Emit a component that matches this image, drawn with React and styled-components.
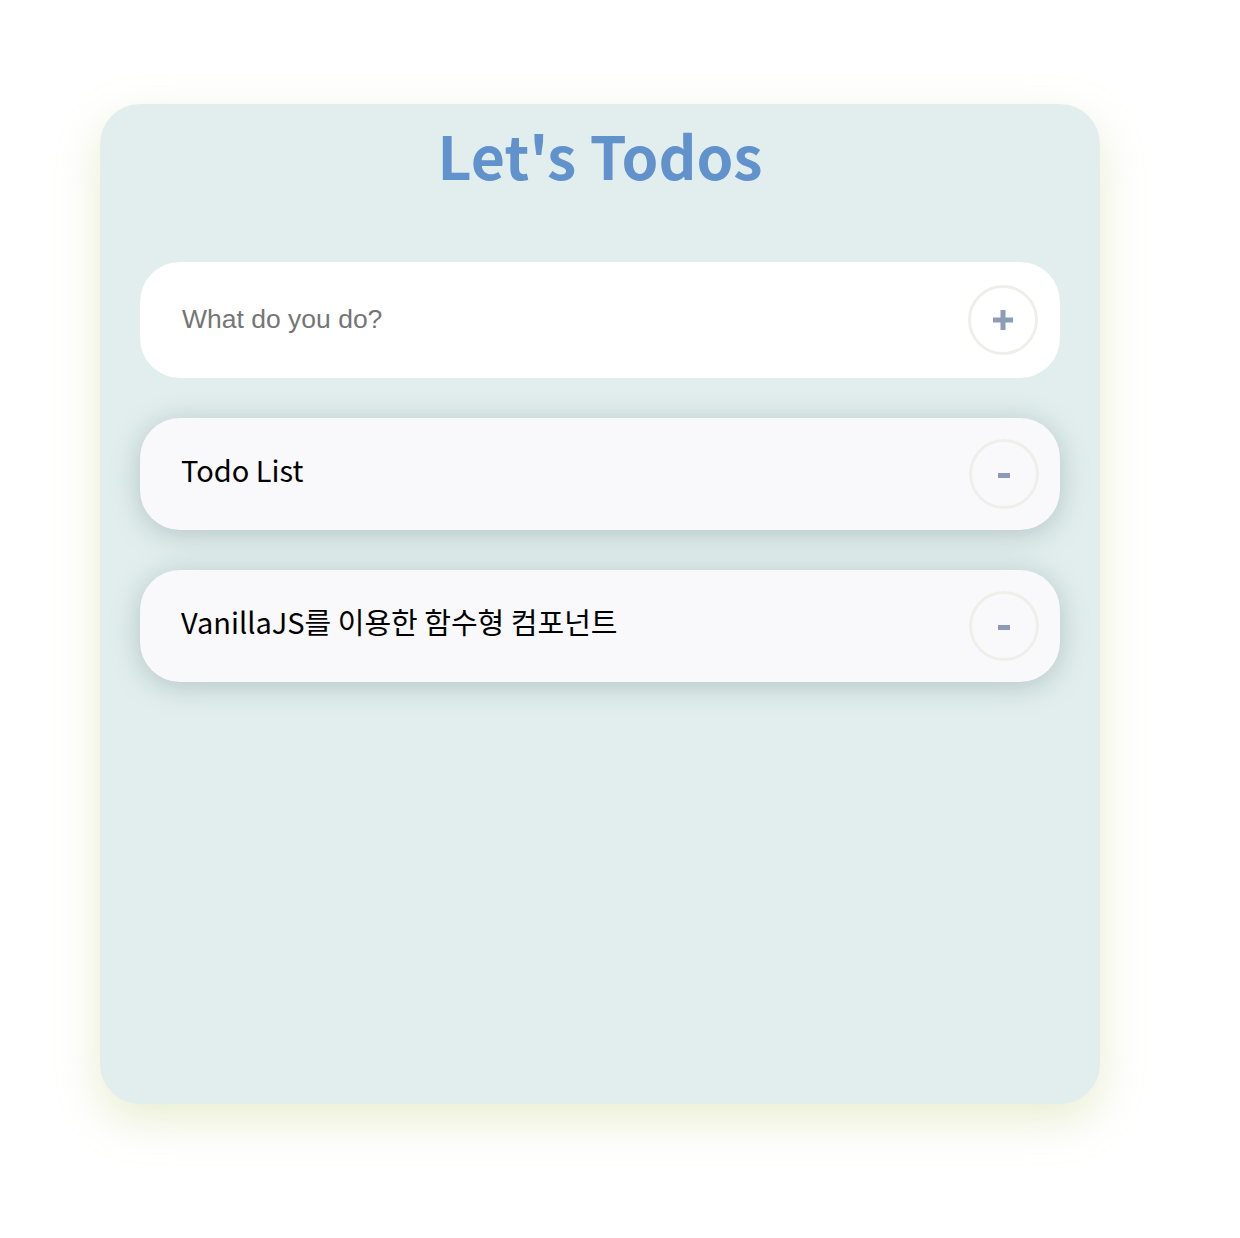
import React from "react";
import styled, { createGlobalStyle } from "styled-components";

const GlobalStyle = createGlobalStyle`
  html, body {
    margin: 0;
    padding: 0;
    background: #ffffff;
  }
`;

const Page = styled.div`
  padding: 104px 140px 134px 100px;
`;

const Board = styled.div`
  width: 1000px;
  height: 1000px;
  box-sizing: border-box;
  padding: 0 40px;
  background-color: #e2eeee;
  border-radius: 40px;
  box-shadow: 0 16px 44px rgba(226, 234, 196, 0.8);
  font-family: "Noto Sans CJK KR", "Noto Sans", sans-serif;
`;

const Title = styled.h1`
  margin: 0;
  padding-top: 6px;
  height: 158px;
  box-sizing: border-box;
  text-align: center;
  font-size: 59px;
  font-weight: 700;
  line-height: 90px;
  color: #6192cc;
`;

const InputRow = styled.form`
  height: 116px;
  box-sizing: border-box;
  display: flex;
  align-items: center;
  justify-content: space-between;
  padding: 0 22px 0 42px;
  background: #ffffff;
  border-radius: 40px;
`;

const TodoInput = styled.input`
  flex: 1;
  border: none;
  outline: none;
  background: transparent;
  font-family: "Liberation Sans", Arial, sans-serif;
  font-size: 26.5px;
  color: #333;
  padding: 0;
  margin-top: -2px;
  &::placeholder {
    color: #757575;
  }
`;

const RoundButton = styled.button`
  width: 70px;
  height: 70px;
  flex: none;
  border-radius: 50%;
  border: 3px solid #efefea;
  background: transparent;
  display: flex;
  align-items: center;
  justify-content: center;
  padding: 0;
  cursor: pointer;
`;

const List = styled.ul`
  list-style: none;
  margin: 40px 0 0;
  padding: 0;
  display: flex;
  flex-direction: column;
  gap: 40px;
`;

const Item = styled.li`
  height: 112px;
  box-sizing: border-box;
  display: flex;
  align-items: center;
  justify-content: space-between;
  padding: 0 21px 0 41px;
  background: #f9f9fb;
  border-radius: 40px;
  box-shadow: 0 4px 28px rgba(100, 130, 125, 0.38);
`;

const ItemText = styled.span`
  font-size: 29px;
  color: #000;
  margin-top: -11px;
`;

const Plus = () => (
  <svg width="22" height="22" viewBox="0 0 22 22">
    <rect x="8.5" y="1" width="5" height="20" fill="#8b9bb8" />
    <rect x="1" y="8.5" width="20" height="5" fill="#8b9bb8" />
  </svg>
);

const Minus = () => (
  <svg width="12" height="6" viewBox="0 0 12 6" style={{ marginTop: 4 }}>
    <rect x="0" y="0" width="12" height="5" fill="#8b9bb8" />
  </svg>
);

const todos = ["Todo List", "VanillaJS를 이용한 함수형 컴포넌트"];

export default function App() {
  return (
    <>
      <GlobalStyle />
      <Page>
        <Board>
          <Title>Let's Todos</Title>
          <InputRow onSubmit={(e) => e.preventDefault()}>
            <TodoInput placeholder="What do you do?" />
            <RoundButton type="submit">
              <Plus />
            </RoundButton>
          </InputRow>
          <List>
            {todos.map((t) => (
              <Item key={t}>
                <ItemText>{t}</ItemText>
                <RoundButton type="button">
                  <Minus />
                </RoundButton>
              </Item>
            ))}
          </List>
        </Board>
      </Page>
    </>
  );
}
